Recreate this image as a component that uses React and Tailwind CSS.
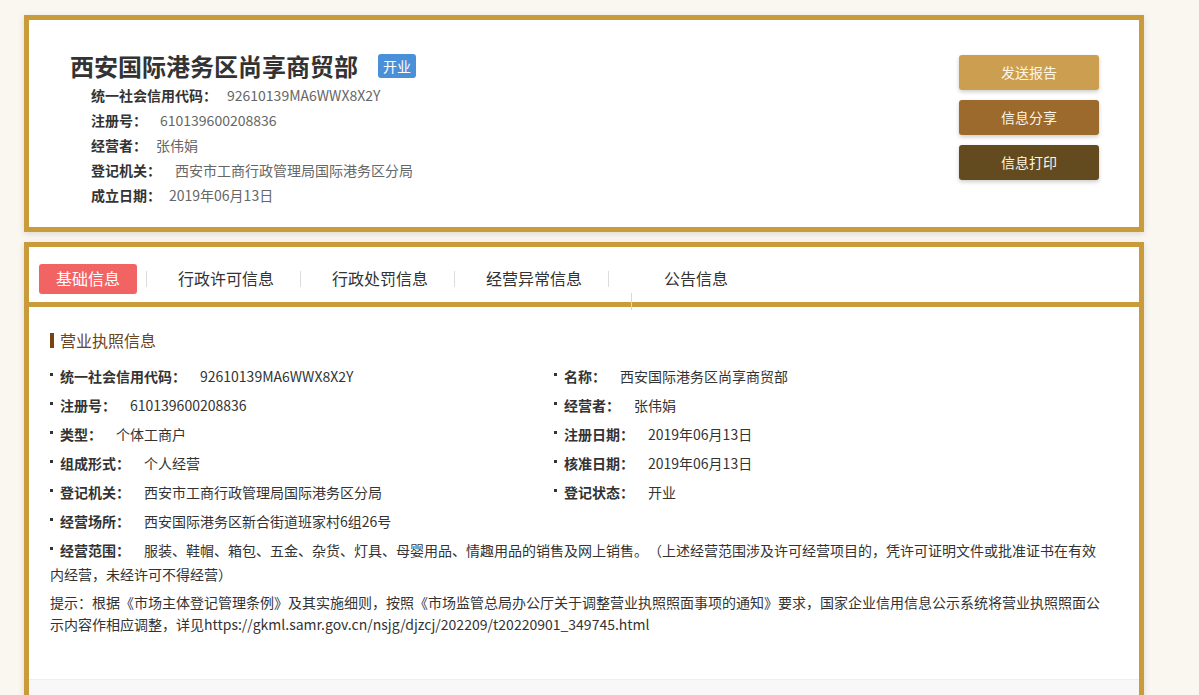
import React from "react";

const font = { fontFamily: '"Microsoft YaHei", "Noto Sans CJK SC", "Noto Sans", sans-serif' };

function TopRow({ label, value, gap }) {
  return (
    <div className="flex h-[25px] items-center text-[14px]">
      <span className="font-bold text-[#333]">{label}</span>
      <span className={`text-[#666] ${gap}`}>{value}</span>
    </div>
  );
}

function Dot() {
  return <span className="mr-[7px] inline-block h-[3px] w-[3px] bg-[#333] align-[6px]" />;
}

function Item({ label, value }) {
  return (
    <div className="mb-[5px] text-[14px] leading-[24px] text-[#333]">
      <Dot />
      <span className="font-bold">{label}</span>
      <span className="ml-[14px]">{value}</span>
    </div>
  );
}

function Sep() {
  return <span className="h-4 w-px bg-[#dcdcdc]" />;
}

export default function App() {
  return (
    <div style={font} className="min-h-screen bg-[#faf7f0] pl-[24px] pt-[15px] [text-spacing-trim:space-all]">
      <div className="w-[1120px]">
        {/* Top card */}
        <div className="flex justify-between border-[5px] border-[#c99b3b] bg-white pb-[19px] pl-[41px] pr-[40px] pt-[30px] shadow-[0_2px_6px_rgba(0,0,0,0.12)]">
          <div>
            <div className="flex h-[32px] items-center">
              <h1 className="text-[24px] font-bold leading-[32px] text-[#333]">西安国际港务区尚享商贸部</h1>
              <span className="ml-[20px] flex h-[24px] w-[38px] items-center justify-center rounded-[3px] bg-[#4a90d9] text-[14px] text-white">
                开业
              </span>
            </div>
            <div className="mt-[1px] pl-[21px]">
              <TopRow label="统一社会信用代码：" value="92610139MA6WWX8X2Y" gap="ml-[10px]" />
              <TopRow label="注册号：" value="610139600208836" gap="ml-[13px]" />
              <TopRow label="经营者：" value="张伟娟" gap="ml-[9px]" />
              <TopRow label="登记机关：" value="西安市工商行政管理局国际港务区分局" gap="ml-[14px]" />
              <TopRow label="成立日期：" value="2019年06月13日" gap="ml-[8px]" />
            </div>
          </div>
          <div className="mt-[5px] flex flex-col gap-[10px]">
            <button className="h-[35px] w-[140px] rounded-[3px] bg-[#cc9e4f] text-[14px] text-[#fff6e6] shadow-[0_2px_4px_rgba(0,0,0,0.2)]">
              发送报告
            </button>
            <button className="h-[35px] w-[140px] rounded-[3px] bg-[#9b6a2c] text-[14px] text-[#fff6e6] shadow-[0_2px_4px_rgba(0,0,0,0.2)]">
              信息分享
            </button>
            <button className="h-[35px] w-[140px] rounded-[3px] bg-[#634b1f] text-[14px] text-[#fff6e6] shadow-[0_2px_4px_rgba(0,0,0,0.2)]">
              信息打印
            </button>
          </div>
        </div>

        {/* Second card */}
        <div className="mt-[10px] border-[5px] border-b-0 border-[#c99b3b] bg-white shadow-[0_2px_6px_rgba(0,0,0,0.12)]">
          <div className="relative flex h-[60px] items-start border-b-[5px] border-[#c99b3b] pl-[10px] pt-[17px]">
            <div className="flex h-[30px] w-[98px] items-center justify-center rounded-[3px] bg-[#f26464] pb-[2px] text-[16px] text-white">
              基础信息
            </div>
            <div className="flex h-[30px] items-center">
              <span className="w-[9px]" />
              <Sep />
              <span className="pb-[3px] pl-[31px] pr-[26px] text-[16px] text-[#333]">行政许可信息</span>
              <Sep />
              <span className="pb-[3px] pl-[31px] pr-[26px] text-[16px] text-[#333]">行政处罚信息</span>
              <Sep />
              <span className="pb-[3px] pl-[31px] pr-[26px] text-[16px] text-[#333]">经营异常信息</span>
              <Sep />
              <span className="pb-[3px] pl-[55px] text-[16px] text-[#333]">公告信息</span>
            </div>
            <span className="absolute left-[602px] top-[46px] h-[17px] w-px bg-[#d8d8d8]" />
          </div>

          <div className="pb-[44px] pl-[21px] pt-[21px]">
            <div className="flex h-[24px] items-center">
              <span className="mr-[6px] h-[15px] w-[4px] bg-[#7a4310]" />
              <span className="pb-[1px] text-[16px] text-[#6b4423]">营业执照信息</span>
            </div>
            <div className="mt-[12px] w-[1058px]">
              <div className="grid w-[1040px] grid-cols-[504px_1fr]">
                <Item label="统一社会信用代码：" value="92610139MA6WWX8X2Y" />
                <Item label="名称：" value="西安国际港务区尚享商贸部" />
                <Item label="注册号：" value="610139600208836" />
                <Item label="经营者：" value="张伟娟" />
                <Item label="类型：" value="个体工商户" />
                <Item label="注册日期：" value="2019年06月13日" />
                <Item label="组成形式：" value="个人经营" />
                <Item label="核准日期：" value="2019年06月13日" />
                <Item label="登记机关：" value="西安市工商行政管理局国际港务区分局" />
                <Item label="登记状态：" value="开业" />
                <Item label="经营场所：" value="西安国际港务区新合街道班家村6组26号" />
                <div />
              </div>
              <Item
                label="经营范围："
                value="服装、鞋帽、箱包、五金、杂货、灯具、母婴用品、情趣用品的销售及网上销售。（上述经营范围涉及许可经营项目的，凭许可证明文件或批准证书在有效内经营，未经许可不得经营）"
              />
              <p className="mt-[3px] text-[14px] leading-[22px] text-[#333]">
                提示：根据《市场主体登记管理条例》及其实施细则，按照《市场监管总局办公厅关于调整营业执照照面事项的通知》要求，国家企业信用信息公示系统将营业执照照面公示内容作相应调整，详见https://gkml.samr.gov.cn/nsjg/djzcj/202209/t20220901_349745.html
              </p>
            </div>
          </div>
          <div className="h-[40px] border-t border-[#eeeeee] bg-[#f8f8f8]" />
        </div>
      </div>
    </div>
  );
}
